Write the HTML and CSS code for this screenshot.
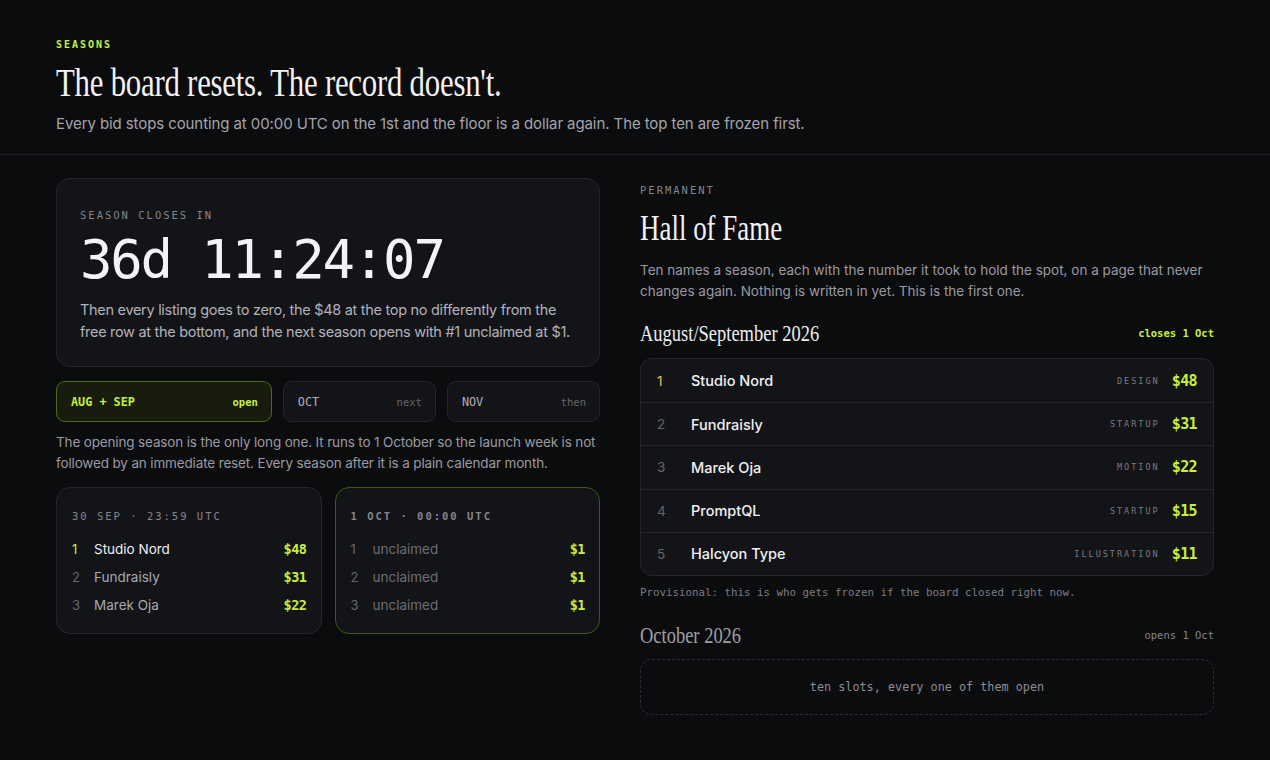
FILE: index.html
```html
<!DOCTYPE html>
<html lang="en">
<head>
<meta charset="utf-8">
<title>Seasons</title>
<link rel="stylesheet" href="styles.css">
</head>
<body>
<header class="top">
  <div class="eyebrow green">SEASONS</div>
  <h1 class="headline"><span class="cond">The board resets. The record doesn't.</span></h1>
  <p class="lede">Every bid stops counting at 00:00 UTC on the 1st and the floor is a dollar again. The top ten are frozen first.</p>
</header>
<main class="layout">
  <section class="left">
    <div class="card countdown">
      <div class="label">SEASON CLOSES IN</div>
      <div class="timer">36d 11:24:07</div>
      <p class="countdown-text">Then every listing goes to zero, the $48 at the top no differently from the free row at the bottom, and the next season opens with #1 unclaimed at $1.</p>
    </div>
    <div class="tabs">
      <div class="tab active"><span class="tab-name">AUG + SEP</span><span class="tab-state">open</span></div>
      <div class="tab"><span class="tab-name">OCT</span><span class="tab-state">next</span></div>
      <div class="tab"><span class="tab-name">NOV</span><span class="tab-state">then</span></div>
    </div>
    <p class="note">The opening season is the only long one. It runs to 1 October so the launch week is not followed by an immediate reset. Every season after it is a plain calendar month.</p>
    <div class="compare">
      <div class="card mini">
        <div class="label">30 SEP · 23:59 UTC</div>
        <div class="mini-row"><span class="rk green">1</span><span class="nm bright">Studio Nord</span><span class="pr">$48</span></div>
        <div class="mini-row"><span class="rk">2</span><span class="nm">Fundraisly</span><span class="pr">$31</span></div>
        <div class="mini-row"><span class="rk">3</span><span class="nm">Marek Oja</span><span class="pr">$22</span></div>
      </div>
      <div class="card mini next">
        <div class="label green strong">1 OCT · 00:00 UTC</div>
        <div class="mini-row"><span class="rk">1</span><span class="nm dim">unclaimed</span><span class="pr">$1</span></div>
        <div class="mini-row"><span class="rk">2</span><span class="nm dim">unclaimed</span><span class="pr">$1</span></div>
        <div class="mini-row"><span class="rk">3</span><span class="nm dim">unclaimed</span><span class="pr">$1</span></div>
      </div>
    </div>
  </section>
  <section class="right">
    <div class="label">PERMANENT</div>
    <h2 class="hof"><span class="cond">Hall of Fame</span></h2>
    <p class="hof-text">Ten names a season, each with the number it took to hold the spot, on a page that never changes again. Nothing is written in yet. This is the first one.</p>
    <div class="season-head">
      <h3 class="season-title"><span class="cond">August/September 2026</span></h3>
      <span class="season-meta green strong">closes 1 Oct</span>
    </div>
    <div class="board">
      <div class="row"><span class="r gold">1</span><span class="n">Studio Nord</span><span class="c">DESIGN</span><span class="p">$48</span></div>
      <div class="row"><span class="r">2</span><span class="n">Fundraisly</span><span class="c">STARTUP</span><span class="p">$31</span></div>
      <div class="row"><span class="r">3</span><span class="n">Marek Oja</span><span class="c">MOTION</span><span class="p">$22</span></div>
      <div class="row"><span class="r">4</span><span class="n">PromptQL</span><span class="c">STARTUP</span><span class="p">$15</span></div>
      <div class="row"><span class="r">5</span><span class="n">Halcyon Type</span><span class="c">ILLUSTRATION</span><span class="p">$11</span></div>
    </div>
    <p class="provisional">Provisional: this is who gets frozen if the board closed right now.</p>
    <div class="season-head later">
      <h3 class="season-title muted"><span class="cond">October 2026</span></h3>
      <span class="season-meta">opens 1 Oct</span>
    </div>
    <div class="empty">ten slots, every one of them open</div>
  </section>
</main>
</body>
</html>
```
FILE: styles.css
```css
* { box-sizing: border-box; }
html, body { margin: 0; padding: 0; }
body {
  background: #0b0c0e;
  color: #e8e8ec;
  font-family: Inter, "Noto Sans", sans-serif;
  width: 1270px;
  height: 760px;
  overflow: hidden;
}
.green { color: #c6f03c; }
.strong { font-weight: 700; }

.top {
  padding: 39px 56px 19px;
  border-bottom: 1px solid #1d1e22;
}
.eyebrow {
  font-family: "DejaVu Sans Mono", monospace;
  font-size: 10px;
  font-weight: 700;
  letter-spacing: 2px;
  line-height: 12px;
}
.cond {
  display: inline-block;
  transform: scaleX(0.77);
  transform-origin: left center;
  white-space: nowrap;
}
.headline {
  margin: 8px 0 0;
  font-family: "Liberation Serif", serif;
  font-weight: 400;
  font-size: 40px;
  line-height: 48px;
  color: #f2f2f4;
  letter-spacing: -0.3px;
}
.lede {
  margin: 6px 0 0;
  font-size: 15px;
  line-height: 22px;
  letter-spacing: -0.09px;
  color: #a4a4ac;
}

.layout {
  display: grid;
  grid-template-columns: 544px 1fr;
  gap: 40px;
  padding: 23px 56px 0;
}

.card {
  background: #131418;
  border: 1px solid #25262b;
  border-radius: 14px;
}
.label {
  font-family: "DejaVu Sans Mono", monospace;
  font-size: 10.5px;
  letter-spacing: 2px;
  line-height: 14px;
  color: #85858c;
}
.countdown {
  padding: 29px 23px 23px;
}
.timer {
  margin-top: 8px;
  font-family: "DejaVu Sans Mono", monospace;
  font-size: 54px;
  line-height: 60px;
  letter-spacing: -2.2px;
  color: #f4f4f6;
}
.countdown-text {
  margin: 9px 0 0;
  font-size: 14.5px;
  line-height: 22px;
  letter-spacing: -0.3px;
  color: #b2b2ba;
}

.tabs {
  display: grid;
  grid-template-columns: 1.41fr 1fr 1fr;
  gap: 11px;
  margin-top: 14px;
}
.tab {
  height: 41px;
  border: 1px solid #25262b;
  background: #131418;
  border-radius: 9px;
  display: flex;
  align-items: center;
  justify-content: space-between;
  padding: 0 13px 0 14px;
  font-family: "DejaVu Sans Mono", monospace;
}
.tab-name { font-size: 11.8px; color: #b0b0b8; }
.tab-state { font-size: 10.5px; color: #66666d; }
.tab.active {
  background: #171c0c;
  border-color: #55661a;
}
.tab.active .tab-name, .tab.active .tab-state { color: #c6f03c; font-weight: 700; }

.note {
  margin: 10px 0 0;
  font-size: 13.5px;
  line-height: 21px;
  letter-spacing: -0.15px;
  color: #9a9aa2;
}

.compare {
  display: grid;
  grid-template-columns: 1fr 1fr;
  gap: 13px;
  margin-top: 13px;
}
.mini {
  padding: 21px 14px 14px 15px;
}
.mini.next { border-color: #46561a; }
.mini .label { margin-bottom: 12px; }
.mini-row {
  display: flex;
  align-items: center;
  height: 28px;
}
.rk {
  width: 22px;
  font-size: 13px;
  color: #66666d;
}
.rk.green { color: #c6f03c; }
.nm {
  flex: 1;
  font-size: 13.5px;
  color: #a8a8b0;
}
.nm.bright { color: #f0f0f3; }
.nm.dim { color: #6d6d74; }
.pr {
  font-family: "DejaVu Sans Mono", monospace;
  font-weight: 700;
  font-size: 13.5px;
  color: #c6f03c;
  letter-spacing: -0.5px;
}

.right { padding-top: 5px; }
.hof {
  margin: 11px 0 0;
  font-family: "Liberation Serif", serif;
  font-weight: 400;
  font-size: 35px;
  line-height: 42px;
  color: #f2f2f4;
}
.hof-text {
  margin: 10px 0 0;
  font-size: 13.5px;
  line-height: 21px;
  color: #9a9aa2;
}
.season-head {
  display: flex;
  justify-content: space-between;
  align-items: center;
  margin-top: 16px;
  height: 30px;
}
.season-title {
  margin: 0;
  font-family: "Liberation Serif", serif;
  font-weight: 400;
  font-size: 24px;
  line-height: 30px;
  color: #ececef;
}
.season-title.muted { color: #9e9ea6; }
.season-meta {
  font-family: "DejaVu Sans Mono", monospace;
  font-size: 10.5px;
  color: #85858c;
}
.season-meta.green { color: #c6f03c; }

.board {
  margin-top: 10px;
  border: 1px solid #25262b;
  border-radius: 12px;
  background: #131418;
  overflow: hidden;
}
.row {
  display: flex;
  align-items: center;
  height: 43.2px;
  padding: 0 16px 0 16px;
  border-top: 1px solid #25262b;
}
.row:first-child { border-top: 0; }
.r {
  width: 34px;
  font-size: 13.5px;
  color: #66666d;
}
.r.gold { color: #e9bf55; }
.n {
  flex: 1;
  font-size: 14.5px;
  font-weight: 500;
  color: #f0f0f3;
}
.c {
  font-family: "DejaVu Sans Mono", monospace;
  font-size: 8.5px;
  letter-spacing: 2px;
  color: #7a7a82;
  margin-right: 12px;
}
.p {
  font-family: "DejaVu Sans Mono", monospace;
  font-weight: 700;
  font-size: 15px;
  letter-spacing: -0.6px;
  color: #c6f03c;
  min-width: 25px;
  text-align: right;
}
.provisional {
  margin: 10px 0 0;
  font-family: "DejaVu Sans Mono", monospace;
  font-size: 10.8px;
  line-height: 14px;
  color: #7c7c84;
}
.season-head.later { margin-top: 20px; }
.empty {
  margin-top: 9px;
  height: 56px;
  border: 1px dashed #2c2d33;
  border-radius: 12px;
  display: flex;
  align-items: center;
  justify-content: center;
  font-family: "DejaVu Sans Mono", monospace;
  font-size: 11.8px;
  color: #8c8c94;
}
```
